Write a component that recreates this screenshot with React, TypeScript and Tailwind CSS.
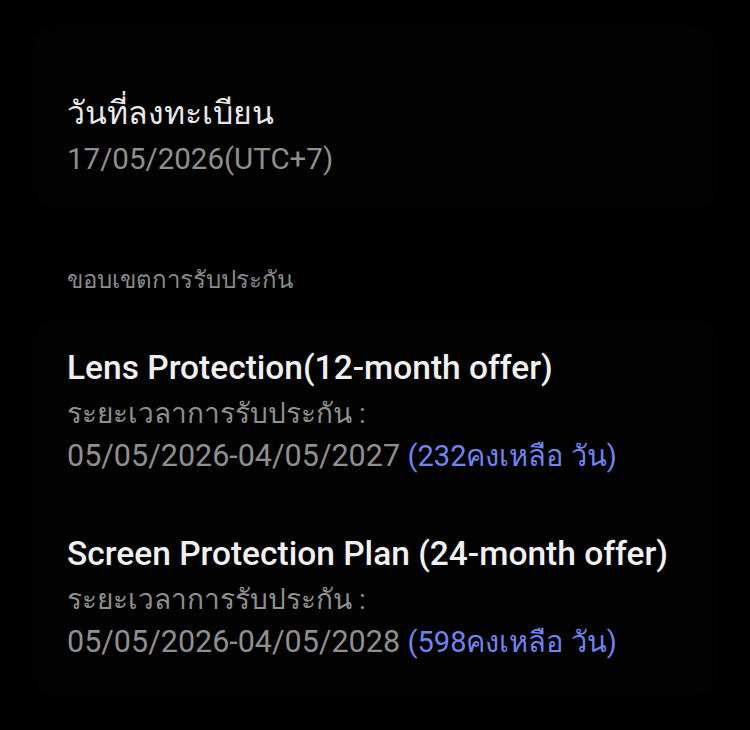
const warranties = [
  {
    name: 'Lens Protection(12-month offer)',
    range: '05/05/2026-04/05/2027',
    left: '232',
  },
  {
    name: 'Screen Protection Plan (24-month offer)',
    range: '05/05/2026-04/05/2028',
    left: '598',
  },
]

const font = { fontFamily: 'Roboto, "Liberation Sans", "Noto Sans", sans-serif' }

export default function App() {
  return (
    <main className="min-h-[730px] bg-black px-8 pt-[25px] pb-8" style={font}>
      {/* Registration date */}
      <section className="rounded-3xl bg-[#020202] px-[35px] pt-[65px] pb-[27px]">
        <h2 className="text-[32px] leading-[46px] text-[#e8e8e8]">วันที่ลงทะเบียน</h2>
        <p className="text-[29.5px] leading-[46px] text-[#8f8f8f]">17/05/2026(UTC+7)</p>
      </section>

      <p className="mt-[55px] mb-[23px] px-[35px] text-[24px] leading-8 text-[#8a8a8a]">
        ขอบเขตการรับประกัน
      </p>

      {/* Warranty list */}
      <section className="flex flex-col gap-[54px] rounded-3xl bg-[#020202] px-[35px] pt-[27px] pb-[32px]">
        {warranties.map((w) => (
          <div key={w.name}>
            <h3 className="text-[33.5px] font-medium leading-[44px] text-[#f0f0f0]">{w.name}</h3>
            <p className="mt-[2px] text-[28px] leading-[44px] text-[#8f8f8f]">ระยะเวลาการรับประกัน :</p>
            <p className="-mt-[2px] text-[30.5px] leading-[44px] text-[#8f8f8f]">
              {w.range}{' '}
              <span className="text-[29px] text-[#7083f0]">({w.left}คงเหลือ วัน)</span>
            </p>
          </div>
        ))}
      </section>
    </main>
  )
}
